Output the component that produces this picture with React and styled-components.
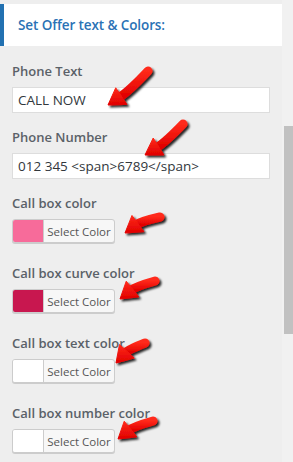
import styled, { createGlobalStyle } from 'styled-components';

const Global = createGlobalStyle`
body{
    margin: 0;
    background: #eeeeee;
    font-family: "Open Sans", "Noto Sans", sans-serif;
    overflow: hidden;
}
`

const Page = styled.div`
position: relative;
display: flex;
flex-flow: row;
width: 293px;
height: 462px;
`

const Main = styled.div`
width: 282px;
display: flex;
flex-flow: column;
`

const Header = styled.div`
margin-top: 4px;
height: 42px;
background: #fff;
border-left: 4px solid #2271b1;
padding-left: 14px;
display: flex;
align-items: center;
color: #2a72b5;
font-size: 13.5px;
font-weight: 600;
letter-spacing: -0.1px;
`

const Form = styled.div`
padding: 16px 12px 0 12px;
display: flex;
flex-flow: column;
`

const Field = styled.div`
display: flex;
flex-flow: column;
align-items: flex-start;
margin-bottom: ${p => p.$gap}px;
`

const Label = styled.div`
font-size: 13px;
font-weight: 600;
line-height: 18px;
color: #5a6168;
margin-bottom: 7px;
`

const TextInput = styled.div`
box-sizing: border-box;
width: 258px;
height: 26px;
background: #fff;
border: 1px solid #dddddd;
padding: 0 5px;
display: flex;
align-items: center;
font-size: 13.5px;
color: #32373c;
white-space: pre;
`

const ColorButton = styled.div`
box-sizing: border-box;
display: flex;
width: 103px;
height: 24px;
border: 1px solid #cccccc;
border-radius: 3px;
box-shadow: 0 1px 0 #cccccc;
background: #f7f7f7;
overflow: hidden;
`

const Swatch = styled.div`
width: 30px;
background: ${p => p.$color};
border-right: 1px solid #cccccc;
`

const SwatchText = styled.div`
flex: 1;
display: flex;
align-items: center;
justify-content: center;
font-size: 11.5px;
color: #555555;
`

const Track = styled.div`
width: 11px;
background: #f1f1f1;
display: flex;
flex-flow: column;
align-items: flex-end;
`

const Thumb = styled.div`
margin-top: 126px;
width: 9px;
height: 208px;
background: #c1c1c1;
`

const Overlay = styled.svg`
position: absolute;
left: 0;
top: 0;
pointer-events: none;
`

const arrows = [
    { sx: 148, sy: 71, tx: 108, ty: 105, bend: -3 },
    { sx: 183, sy: 124, tx: 145, ty: 155, bend: -3 },
    { sx: 160, sy: 217, tx: 125, ty: 233, bend: 4 },
    { sx: 155, sy: 281, tx: 120, ty: 299, bend: 4 },
    { sx: 145, sy: 343, tx: 116, ty: 363, bend: 4 },
    { sx: 153, sy: 421, tx: 118, ty: 439, bend: 4 },
]

function Arrow({ sx, sy, tx, ty, bend }) {
    let dx = tx - sx, dy = ty - sy
    const L = Math.hypot(dx, dy)
    const mx = (sx + tx) / 2 + (-dy / L) * bend
    const my = (sy + ty) / 2 + (dx / L) * bend
    let ux = tx - mx, uy = ty - my
    const l2 = Math.hypot(ux, uy)
    ux /= l2; uy /= l2
    const nx = -uy, ny = ux
    const h = 16, w = 10
    const bx = tx - ux * h, by = ty - uy * h
    return (
        <g filter="url(#shadow)">
            <path d={`M${sx} ${sy} Q${mx} ${my} ${bx + ux * 2} ${by + uy * 2}`}
                stroke="url(#red)" strokeWidth="9" strokeLinecap="round" fill="none" />
            <polygon points={`${tx},${ty} ${bx + nx * w},${by + ny * w} ${bx - nx * w},${by - ny * w}`}
                fill="url(#red)" stroke="url(#red)" strokeWidth="1" strokeLinejoin="round" />
        </g>
    )
}

const fields = [
    { label: 'Phone Text', value: 'CALL NOW', gap: 15 },
    { label: 'Phone Number', value: '012 345 <span>6789</span>', gap: 15 },
    { label: 'Call box color', color: '#f76b9a', gap: 21 },
    { label: 'Call box curve color', color: '#c8174f', gap: 21 },
    { label: 'Call box text color', color: '#ffffff', gap: 21 },
    { label: 'Call box number color', color: '#ffffff', gap: 0 },
]

export default function App() {
    return (
        <Page>
            <Global />
            <Main>
                <Header>Set Offer text &amp; Colors:</Header>
                <Form>
                    {fields.map(f => (
                        <Field key={f.label} $gap={f.gap}>
                            <Label>{f.label}</Label>
                            {f.color ? (
                                <ColorButton>
                                    <Swatch $color={f.color} />
                                    <SwatchText>Select Color</SwatchText>
                                </ColorButton>
                            ) : (
                                <TextInput>{f.value}</TextInput>
                            )}
                        </Field>
                    ))}
                </Form>
            </Main>
            <Track>
                <Thumb />
            </Track>
            <Overlay width="293" height="462">
                <defs>
                    <linearGradient id="red" x1="0" y1="0" x2="0" y2="1">
                        <stop offset="0" stopColor="#ff2a1a" />
                        <stop offset="1" stopColor="#e00000" />
                    </linearGradient>
                    <filter id="shadow" x="-30%" y="-30%" width="160%" height="160%">
                        <feDropShadow dx="2" dy="2" stdDeviation="1.3" floodColor="#000" floodOpacity="0.85" />
                    </filter>
                </defs>
                {arrows.map((a, i) => <Arrow key={i} {...a} />)}
            </Overlay>
        </Page>
    )
}
